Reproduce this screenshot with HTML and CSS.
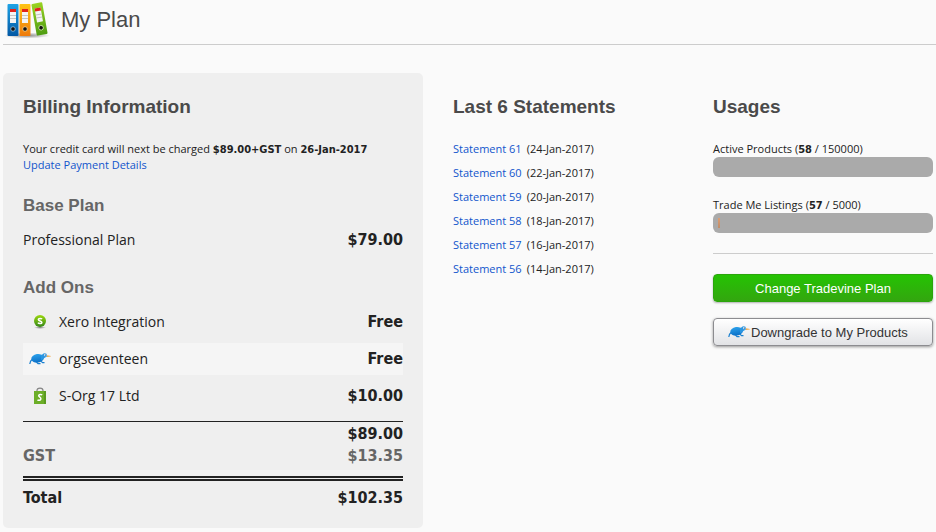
FILE: index.html
```html
<!DOCTYPE html>
<html lang="en">
<head>
  <meta charset="UTF-8" />
  <meta name="viewport" content="width=device-width, initial-scale=1.0" />
  <title>My Plan</title>
  <link rel="stylesheet" href="styles.css">
</head>
<body>
  <svg width="0" height="0" class="defs" aria-hidden="true">
    <defs>
      <linearGradient id="gBlue" x1="0" y1="0" x2="0" y2="1"><stop offset="0" stop-color="#1fa3e6"/><stop offset="1" stop-color="#0358a4"/></linearGradient>
      <linearGradient id="gOrange" x1="0" y1="0" x2="0" y2="1"><stop offset="0" stop-color="#ffc414"/><stop offset="1" stop-color="#ee7a0c"/></linearGradient>
      <linearGradient id="gGreen" x1="0" y1="0" x2="0" y2="1"><stop offset="0" stop-color="#9ad321"/><stop offset="1" stop-color="#4f9d12"/></linearGradient>
      <linearGradient id="gCoin" x1="0" y1="0" x2="0" y2="1"><stop offset="0" stop-color="#9bd80c"/><stop offset="1" stop-color="#35871b"/></linearGradient>
      <linearGradient id="gKiwi" x1="0" y1="0" x2="0" y2="1"><stop offset="0" stop-color="#2ba0ea"/><stop offset="1" stop-color="#0b6fc6"/></linearGradient>
      <radialGradient id="gShadow"><stop offset="0" stop-color="#000" stop-opacity=".45"/><stop offset="1" stop-color="#000" stop-opacity="0"/></radialGradient>
      <symbol id="kiwi" viewBox="0 0 22 14">
        <path d="M17.500 3.200L22 4L21.500 4.600L17.500 5Z" fill="#f0a23c"/>
        <path d="M3 7.600C1.700 8.600 1 10 .8 12" fill="none" stroke="#1a80d0" stroke-width="1.200"/>
        <ellipse cx="8.500" cy="6.300" rx="6.300" ry="4.300" transform="rotate(-8 8.500 6.300)" fill="url(#gKiwi)"/>
        <path d="M12 3C13.500 3 13.800 1.300 15.700 1.200C17.500 1.200 18.500 2.600 17.900 4C17.300 5.500 15 5.600 14.200 7.500L12 8Z" fill="#2a96e2"/>
        <path d="M7.500 10L9 11.700H11.500M12 9.200L13.500 10.700H15.500" fill="none" stroke="#1a80d0" stroke-width="1.200"/>
        <circle cx="16.200" cy="3" r="1.300" fill="#c4e2f7"/>
        <circle cx="16.400" cy="3" r=".6" fill="#123a62"/>
      </symbol>
    </defs>
  </svg>

  <header class="page-header">
    <svg class="binders" width="48" height="38" viewBox="0 0 48 38" aria-hidden="true">
      <ellipse cx="24" cy="34.500" rx="23" ry="3" fill="url(#gShadow)"/>
      <g>
        <rect x="4.500" y="3" width="11" height="32" rx="1" fill="url(#gBlue)"/>
        <rect x="7" y="8" width="6" height="14" fill="#f4f4f4"/>
        <rect x="7" y="8" width="6" height="3" fill="#e2231a"/>
        <path d="M7 14.500h6M7 17.500h6" stroke="#c4c4c4"/>
        <circle cx="10" cy="28" r="2.300" fill="#111" stroke="#9ec3da" stroke-width=".8"/>
      </g>
      <g>
        <rect x="16.500" y="3" width="11" height="32" rx="1" fill="url(#gOrange)"/>
        <rect x="19" y="8" width="6" height="14" fill="#f4f4f4"/>
        <rect x="19" y="8" width="6" height="3" fill="#e2231a"/>
        <path d="M19 14.500h6M19 17.500h6" stroke="#c4c4c4"/>
        <circle cx="22" cy="28" r="2.300" fill="#111" stroke="#f7d79b" stroke-width=".8"/>
      </g>
      <g transform="translate(0 -1) rotate(-10 36 19)">
        <rect x="31" y="3" width="11" height="32" rx="1" fill="url(#gGreen)"/>
        <rect x="33.500" y="8" width="6" height="14" fill="#f4f4f4"/>
        <rect x="33.500" y="8" width="6" height="3" fill="#e2231a"/>
        <path d="M33.500 14.500h6M33.500 17.500h6" stroke="#c4c4c4"/>
        <circle cx="36.500" cy="28" r="2.300" fill="#111" stroke="#d3ecaa" stroke-width=".8"/>
      </g>
    </svg>
    <h1>My Plan</h1>
  </header>

  <main class="columns">
    <section class="billing">
      <h2>Billing Information</h2>
      <p>Your credit card will next be charged <b>$89.00+GST</b> on <b>26-Jan-2017</b><br>
        <a href="#">Update Payment Details</a></p>

      <h3>Base Plan</h3>
      <table class="base">
        <tr><td>Professional Plan</td><td class="price">$79.00</td></tr>
      </table>

      <h3>Add Ons</h3>
      <table class="addons">
        <tr>
          <td class="icon">
            <svg width="16" height="16" viewBox="0 0 16 16" aria-hidden="true">
              <ellipse cx="8" cy="13.500" rx="6" ry="1.500" fill="url(#gShadow)"/>
              <circle cx="8" cy="7" r="6" fill="url(#gCoin)"/>
              <path d="M10 5.200C9.500 4.300 6.300 4 6.300 5.600C6.300 7.300 9.900 6.500 9.900 8.400C9.900 10 6.600 9.900 6 8.700" fill="none" stroke="#fff" stroke-width="1.500"/>
            </svg>
          </td>
          <td>Xero Integration</td>
          <td class="price">Free</td>
        </tr>
        <tr class="alt">
          <td class="icon"><svg width="22" height="14" aria-hidden="true"><use href="#kiwi"/></svg></td>
          <td>orgseventeen</td>
          <td class="price">Free</td>
        </tr>
        <tr>
          <td class="icon">
            <svg width="16" height="18" viewBox="0 0 16 18" aria-hidden="true">
              <path d="M5 6V3.500C5 .4 11 .4 11 3.500V6" fill="none" stroke="#858585" stroke-width="1.200"/>
              <path d="M2 4H14V17H2Z" fill="#5a9a20"/>
              <path d="M2 4H12V17H2Z" fill="#6cae28"/>
              <path d="M10.200 8C9.200 7.100 6.600 7.200 6.700 8.700C6.800 10.200 9.200 10.100 8.900 11.900C8.600 13.700 6.500 13.600 5.500 12.800" fill="none" stroke="#fff" stroke-width="1.500"/>
            </svg>
          </td>
          <td>S-Org 17 Ltd</td>
          <td class="price">$10.00</td>
        </tr>
      </table>

      <table class="totals">
        <tr><td></td><td class="price">$89.00</td></tr>
        <tr class="gst"><td>GST</td><td class="price">$13.35</td></tr>
        <tr class="total"><td>Total</td><td class="price">$102.35</td></tr>
      </table>
    </section>

    <section class="statements">
      <h2>Last 6 Statements</h2>
      <ul>
        <li><a href="#">Statement 61</a><span>(24-Jan-2017)</span></li>
        <li><a href="#">Statement 60</a><span>(22-Jan-2017)</span></li>
        <li><a href="#">Statement 59</a><span>(20-Jan-2017)</span></li>
        <li><a href="#">Statement 58</a><span>(18-Jan-2017)</span></li>
        <li><a href="#">Statement 57</a><span>(16-Jan-2017)</span></li>
        <li><a href="#">Statement 56</a><span>(14-Jan-2017)</span></li>
      </ul>
    </section>

    <section class="usages">
      <h2>Usages</h2>
      <div class="usage">
        <div>Active Products (<b>58</b> / 150000)</div>
        <div class="bar"><div class="fill" style="width: 0%"></div></div>
      </div>
      <div class="usage">
        <div>Trade Me Listings (<b>57</b> / 5000)</div>
        <div class="bar"><div class="fill" style="width: 1%"></div></div>
      </div>
      <div class="actions">
        <button type="button" class="btn btn-green">Change Tradevine Plan</button>
        <button type="button" class="btn btn-grey"><svg width="22" height="14" aria-hidden="true"><use href="#kiwi"/></svg>Downgrade to My Products</button>
      </div>
    </section>
  </main>
</body>
</html>
```
FILE: styles.css
```css
* {
  box-sizing: border-box;
}
body {
  margin: 0;
  padding: 0 3px 4px;
  background: #fafafa;
  color: #222;
  font-family: Tahoma, "Open Sans", "Noto Sans", sans-serif;
  font-size: 11px;
  line-height: 16px;
}
.defs {
  position: absolute;
}
h1, h2, h3, .btn {
  font-family: Arial, "Liberation Sans", sans-serif;
}
h1, h2, h3, p, ul {
  margin: 0;
  padding: 0;
}
b, .price, .gst, .total {
  font-family: Tahoma, "DejaVu Sans Condensed", "DejaVu Sans", sans-serif;
  font-weight: bold;
}
b {
  line-height: 1;
}
a {
  color: #1155cc;
  text-decoration: none;
}
a:hover {
  text-decoration: underline;
}
.page-header {
  display: flex;
  align-items: center;
  gap: 10px;
  height: 45px;
  padding-bottom: 5px;
  margin-right: -3px;
  border-bottom: 1px solid #ccc;
}
h1 {
  color: #4a4a4a;
  font-size: 22px;
  font-weight: normal;
}
.columns {
  display: grid;
  grid-template-columns: 42fr 23fr 22fr;
  gap: 30px;
  margin-top: 28px;
}
h2 {
  color: #4a4a4a;
  font-size: 19px;
  line-height: 28px;
  margin-bottom: 20px;
}
h3 {
  color: #666;
  font-size: 17px;
  line-height: 20px;
}
.billing {
  padding: 20px 20px 19px;
  background: #efefef;
  border-radius: 5px;
}
.billing p {
  margin-bottom: 23px;
}
.statements, .usages {
  padding-top: 20px;
}

table {
  width: 100%;
  border-collapse: collapse;
  font-size: 14px;
  line-height: 22px;
}
td {
  padding: 0;
}
.price, .gst, .total {
  font-size: 16px;
}
.price {
  text-align: right;
}
.base {
  margin: 13px 0 27px;
}
.addons {
  border-collapse: separate;
  border-spacing: 0 5px;
  margin: 3px 0 4px;
}
.addons td {
  height: 32px;
}
.addons .icon {
  width: 36px;
  padding-right: 2px;
}
.icon svg {
  display: block;
  margin: 0 auto;
}
.alt td {
  background: #f5f5f5;
}
.totals {
  border-top: 1px solid #222;
  border-collapse: separate;
  border-spacing: 0;
}
.totals tr:first-child td {
  padding-top: 1px;
}
.gst td {
  color: #666;
  padding-bottom: 9px;
}
.total td {
  border-top: 5px double #222;
  padding-top: 6px;
}

.statements ul {
  list-style: none;
}
.statements li {
  display: flex;
  gap: 5px;
  margin-bottom: 8px;
}

.usage {
  margin-bottom: 20px;
}
.bar {
  height: 20px;
  padding: 5px;
  background: #aaa;
  border-radius: 6px;
}
.fill {
  height: 10px;
  background: linear-gradient(#dc9e74, #c08c68);
}
.actions {
  display: flex;
  flex-direction: column;
  gap: 16px;
  padding-top: 20px;
  border-top: 1px solid #ccc;
}
.btn {
  display: flex;
  align-items: center;
  justify-content: center;
  height: 28px;
  padding: 0;
  border-radius: 4px;
  font-size: 13px;
  cursor: pointer;
}
.btn-green {
  color: #fff;
  border: 1px solid #2ba50c;
  background: linear-gradient(#25c303, #33a60f);
  box-shadow: 0 1px 2px rgba(0, 0, 0, 0.3);
}
.btn-grey {
  justify-content: flex-start;
  gap: 1px;
  padding: 0 14px;
  color: #333;
  border: 1px solid #8c8c90;
  background: linear-gradient(#fff, #e2e3e6);
  box-shadow: 0 1px 3px rgba(0, 0, 0, 0.4);
}
```
